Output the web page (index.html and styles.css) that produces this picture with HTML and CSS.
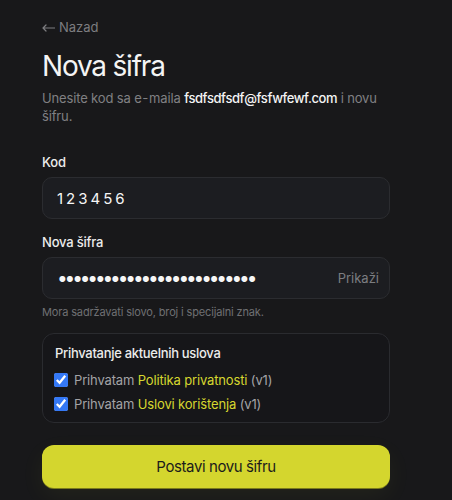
FILE: index.html
```html
<!DOCTYPE html>
<html lang="bs">
<head>
<meta charset="utf-8">
<title>Nova šifra</title>
<link rel="stylesheet" href="styles.css">
</head>
<body>
<main class="page">
  <a class="back" href="#"><svg class="back-arrow" width="13" height="8" viewBox="0 0 13 8" aria-hidden="true"><path d="M12.5 4H1M4 1L1 4l3 3" fill="none" stroke="currentColor" stroke-width="1.2" stroke-linecap="round" stroke-linejoin="round"/></svg><span>Nazad</span></a>
  <h1 class="title">Nova šifra</h1>
  <p class="sub">Unesite kod sa e<span class="hy">‑</span>maila <strong class="email">fsdfsdfsdf@fsfwfewf.com</strong> i novu šifru.</p>

  <form class="form">
    <label class="label" for="code">Kod</label>
    <div class="field">
      <input class="input code" id="code" type="text" value="123456">
    </div>

    <label class="label label-gap" for="pw">Nova šifra</label>
    <div class="field">
      <input class="input pw" id="pw" type="password" value="abcdefghijklmnopqrstuvwxyz">
      <button class="show" type="button">Prikaži</button>
    </div>
    <p class="hint">Mora sadržavati slovo, broj i specijalni znak.</p>

    <fieldset class="terms">
      <div class="terms-title">Prihvatanje aktuelnih uslova</div>
      <label class="check"><input type="checkbox" checked><span>Prihvatam <a href="#" class="link">Politika privatnosti</a> (v1)</span></label>
      <label class="check"><input type="checkbox" checked><span>Prihvatam <a href="#" class="link">Uslovi korištenja</a> (v1)</span></label>
    </fieldset>

    <button class="submit" type="submit">Postavi novu šifru</button>
  </form>
</main>
</body>
</html>
```
FILE: styles.css
```css
* { box-sizing: border-box; }
html, body { margin: 0; padding: 0; }
body {
  background: #18181a;
  font-family: Inter, "Noto Sans", sans-serif;
  color: #f2f2f2;
  height: 500px;
  overflow: hidden;
}
.page {
  width: 348px;
  margin-left: 42px;
  padding-top: 18px;
}
.back {
  display: flex;
  align-items: center;
  gap: 4px;
  font-size: 13px;
  line-height: 18px;
  color: #7d7d80;
  text-decoration: none;
}
.back-arrow { display: block; margin-top: 1px; }
.title {
  margin: 13px 0 0;
  font-size: 28px;
  line-height: 34px;
  font-weight: 400;
  color: #f4f4f4;
  letter-spacing: -1.2px;
}
.sub {
  margin: 6px 0 0;
  font-size: 13px;
  line-height: 18px;
  color: #808083;
  letter-spacing: -0.15px;
}
.hy { padding: 0 1.5px; }
.email { font-weight: 500; color: #f4f4f4; letter-spacing: -0.4px; }
.form { display: flex; flex-direction: column; margin-top: 28px; }
.label {
  font-size: 13px;
  line-height: 18px;
  font-weight: 500;
  color: #ececec;
  margin-bottom: 6px;
  letter-spacing: -0.2px;
}
.label-gap { margin-top: 14px; }
.field {
  display: flex;
  align-items: center;
  height: 42px;
  background: #1c1d21;
  border: 1px solid #2b2c30;
  border-radius: 10px;
  padding: 0 10px 0 14px;
}
.input {
  flex: 1;
  min-width: 0;
  background: transparent;
  border: 0;
  outline: none;
  color: #f6f6f6;
  font-family: Inter, sans-serif;
  font-size: 15px;
  padding: 0;
}
.code { letter-spacing: 3px; }
.pw { letter-spacing: -3.1px; font-size: 19px; }
.show {
  background: none;
  border: 0;
  padding: 0;
  font-family: Inter, sans-serif;
  font-size: 13px;
  color: #7c7d81;
}
.hint {
  margin: 5px 0 0;
  font-size: 11px;
  line-height: 16px;
  color: #6f7073;
  letter-spacing: -0.15px;
}
.terms {
  margin: 13px 0 0;
  border: 1px solid #2a2b2f;
  border-radius: 12px;
  padding: 10px 12px 6px;
  background: #161619;
  display: flex;
  flex-direction: column;
}
.terms-title {
  font-size: 13px;
  line-height: 18px;
  font-weight: 500;
  color: #ececec;
  margin-bottom: 6px;
  letter-spacing: -0.3px;
}
.check {
  display: flex;
  align-items: center;
  gap: 6px;
  height: 24px;
  font-size: 13px;
  color: #a3a3a6;
  letter-spacing: -0.15px;
}
.check input {
  margin: 0 0 0 -1px;
  width: 14px;
  height: 14px;
  accent-color: #3478f6;
}
.link { color: #d6d72f; text-decoration: none; }
.submit {
  margin-top: 22px;
  height: 43px;
  border: 0;
  border-radius: 12px;
  background: #d4d62e;
  box-shadow: 0 1px 0 #7b7c1c, 0 8px 24px rgba(212, 214, 46, 0.06);
  font-family: Inter, sans-serif;
  font-size: 15px;
  letter-spacing: -0.4px;
  color: #1b1b1b;
}
```
